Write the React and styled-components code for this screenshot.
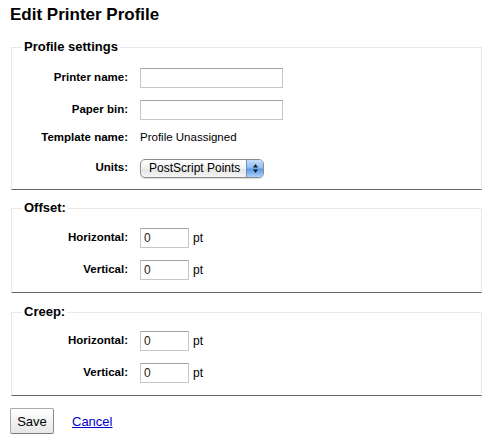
import React from 'react';
import styled, { createGlobalStyle } from 'styled-components';

const GlobalStyle = createGlobalStyle`
	html, body {
		margin: 0;
		padding: 0;
		background: #fff;
	}
	body {
		font-family: "Liberation Sans", Arial, sans-serif;
		color: #000;
	}
`

const Page = styled.div`
	padding: 0 8px 0 10px;
`
const Title = styled.h1`
	font-size: 17px;
	line-height: 20px;
	font-weight: bold;
	margin: 5px 0 0 0;
`
const Fieldset = styled.fieldset`
	margin: ${props => props.$mt}px 0 0 1px;
	padding: ${props => props.$pt}px 0 ${props => props.$pb}px 0;
	min-width: 0;
	border: 1px solid #e8e8e8;
	border-bottom: 1px solid #666;
`
const Legend = styled.legend`
	font-size: 13px;
	line-height: 14px;
	font-weight: bold;
	padding: 0 2px;
	margin-left: 10px;
`
const Row = styled.div`
	display: grid;
	grid-template-columns: 116px auto;
	column-gap: 12px;
	align-items: center;
	height: 20px;
	margin-top: ${props => props.$mt || 0}px;
`
const Label = styled.label`
	text-align: right;
	font-size: 11.5px;
	line-height: 14px;
	font-weight: bold;
	padding-bottom: 3px;
`
const Control = styled.div`
	display: flex;
	align-items: center;
	gap: 4px;
	font-size: 11.5px;
`
const Text = styled.span`
	font-size: 11.5px;
	line-height: 14px;
	padding-bottom: 2px;
`
const Input = styled.input`
	box-sizing: border-box;
	width: ${props => props.$w}px;
	height: 20px;
	margin: 0;
	padding: 0 3px;
	font-family: "Liberation Sans", Arial, sans-serif;
	font-size: 12px;
	color: #2b1a0c;
	background: #fff;
	border: 1px solid #c6c6c6;
	border-top-color: #a3a3a3;
	border-radius: 0;
	outline: none;
`
const Unit = styled.span`
	font-size: 12px;
	padding-bottom: 1px;
`
const Select = styled.div`
	box-sizing: border-box;
	display: flex;
	width: 124px;
	height: 19px;
	border: 1px solid #8c8c8c;
	border-radius: 5px;
	overflow: hidden;
	background: linear-gradient(#ffffff, #f1f1f1 50%, #e3e3e3 51%, #f4f4f4);
	box-shadow: 0 1px 1px rgba(0, 0, 0, 0.15);
`
const SelectText = styled.span`
	flex: 1;
	padding-left: 8px;
	font-size: 12px;
	line-height: 17px;
	white-space: nowrap;
`
const Stepper = styled.span`
	width: 16px;
	display: flex;
	align-items: center;
	justify-content: center;
	border-left: 1px solid #6b8fc4;
	background: linear-gradient(#c9defa, #8ebcf2 45%, #5d9ce9 55%, #a9d0fa);
`
const Actions = styled.div`
	display: flex;
	align-items: center;
	gap: 18px;
	margin-top: 12px;
`
const Button = styled.button`
	box-sizing: border-box;
	width: 44px;
	height: 26px;
	margin: 0;
	padding: 0;
	font-family: "Liberation Sans", Arial, sans-serif;
	font-size: 13px;
	color: #000;
	border: 1px solid #a8a8a8;
	border-bottom-color: #7a7a7a;
	border-right-color: #8a8a8a;
	border-radius: 2px;
	background: linear-gradient(#ffffff, #f3f3f3 50%, #e6e6e6);
`
const CancelLink = styled.a`
	font-size: 13px;
	color: #0000cc;
	text-decoration: underline;
`

const Arrows = () => (
	<svg width="7" height="11" viewBox="0 0 7 11">
		<path d="M3.5 1 L6 4.5 L1 4.5 Z" fill="#1a1a1a" />
		<path d="M3.5 10 L6 6.5 L1 6.5 Z" fill="#1a1a1a" />
	</svg>
)

const OffsetRows = ({ first }) => (
	<>
		<Row>
			<Label>Horizontal:</Label>
			<Control>
				<Input $w={49} defaultValue="0" />
				<Unit>pt</Unit>
			</Control>
		</Row>
		<Row $mt={12}>
			<Label>Vertical:</Label>
			<Control>
				<Input $w={49} defaultValue="0" />
				<Unit>pt</Unit>
			</Control>
		</Row>
	</>
)

const App = () => {
	return (
		<Page>
			<GlobalStyle />
			<Title>Edit Printer Profile</Title>
			<Fieldset $mt={15} $pt={14} $pb={11}>
				<Legend>Profile settings</Legend>
				<Row>
					<Label>Printer name:</Label>
					<Control><Input $w={143} /></Control>
				</Row>
				<Row $mt={12}>
					<Label>Paper bin:</Label>
					<Control><Input $w={143} /></Control>
				</Row>
				<Row $mt={8}>
					<Label>Template name:</Label>
					<Control><Text>Profile Unassigned</Text></Control>
				</Row>
				<Row $mt={10}>
					<Label>Units:</Label>
					<Control>
						<Select>
							<SelectText>PostScript Points</SelectText>
							<Stepper><Arrows /></Stepper>
						</Select>
					</Control>
				</Row>
			</Fieldset>
			<Fieldset $mt={11} $pt={13} $pb={12}>
				<Legend>Offset:</Legend>
				<OffsetRows />
			</Fieldset>
			<Fieldset $mt={12} $pt={12} $pb={12}>
				<Legend>Creep:</Legend>
				<OffsetRows />
			</Fieldset>
			<Actions>
				<Button type="button">Save</Button>
				<CancelLink href="#">Cancel</CancelLink>
			</Actions>
		</Page>
	)
}

export default App
